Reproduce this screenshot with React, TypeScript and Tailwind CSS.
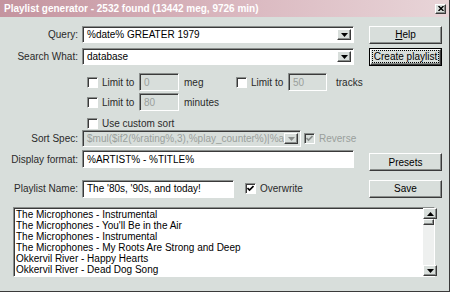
import React from "react";

const font = { fontFamily: "'Liberation Sans', Arial, sans-serif" };

const sunken =
  "border border-t-[#8a8e8c] border-l-[#8a8e8c] border-b-white border-r-white shadow-[inset_1px_1px_0_#3a3a3a]";
const raised =
  "border border-t-white border-l-white border-b-[#3a3a3a] border-r-[#3a3a3a] shadow-[inset_-1px_-1px_0_#8a8e8c]";

function Arrow({ up, disabled }: { up?: boolean; disabled?: boolean }) {
  return (
    <div className={`w-[14px] h-full flex items-center justify-center bg-[#d8dedb] ${raised}`}>
      <svg width="7" height="4" viewBox="0 0 7 4">
        <path d={up ? "M0 4 L3.5 0 L7 4 Z" : "M0 0 L7 0 L3.5 4 Z"} fill={disabled ? "#8a8e8c" : "#000"} />
      </svg>
    </div>
  );
}

function Combo({ value, width, disabled }: { value: string; width: number; disabled?: boolean }) {
  return (
    <div
      className={`h-[17px] flex items-stretch p-[2px] ${sunken} ${disabled ? "bg-[#d8dedb]" : "bg-white"}`}
      style={{ width }}
    >
      <div className={`flex-1 overflow-hidden whitespace-nowrap leading-[12px] pl-[2px] ${disabled ? "text-[#9aa09c]" : "text-black"}`}>
        {value}
      </div>
      <Arrow disabled={disabled} />
    </div>
  );
}

function Field({ value, width, disabled }: { value: string; width: number; disabled?: boolean }) {
  return (
    <div
      className={`h-[18px] flex items-center pl-[4px] whitespace-nowrap overflow-hidden ${sunken} ${disabled ? "bg-[#d8dedb] text-[#9aa09c]" : "bg-white text-black"}`}
      style={{ width }}
    >
      {value}
    </div>
  );
}

function Check({ checked, disabled }: { checked?: boolean; disabled?: boolean }) {
  return (
    <div className={`w-[11px] h-[11px] shrink-0 flex items-center justify-center ${sunken} ${disabled ? "bg-[#d8dedb]" : "bg-white"}`}>
      {checked && (
        <svg width="7" height="7" viewBox="0 0 7 7">
          <path d="M0.5 3 L2.5 5 L6.5 1" stroke={disabled ? "#8a8e8c" : "#000"} strokeWidth="1.6" fill="none" />
        </svg>
      )}
    </div>
  );
}

function Button({ children, focused }: { children: React.ReactNode; focused?: boolean }) {
  return (
    <div className={`w-[73px] h-[18px] bg-[#d8dedb] ${focused ? "border border-black" : ""}`}>
      <div className={`w-full h-full flex items-center justify-center whitespace-nowrap ${raised}`}>
        <span className={focused ? "outline outline-1 outline-dotted outline-black px-[1px] leading-[11px]" : ""}>
          {children}
        </span>
      </div>
    </div>
  );
}

function Label({ children }: { children: React.ReactNode }) {
  return <div className="w-[82px] shrink-0 text-right pr-[4px] text-[#2a2a2a] whitespace-nowrap">{children}</div>;
}

const songs = [
  "The Microphones - Instrumental",
  "The Microphones - You'll Be in the Air",
  "The Microphones - Instrumental",
  "The Microphones - My Roots Are Strong and Deep",
  "Okkervil River - Happy Hearts",
  "Okkervil River - Dead Dog Song",
  "Okkervil River - Westfall",
];

export default function App() {
  return (
    <div
      className="w-[450px] h-[292px] bg-[#d8dedb] text-[10px] text-black flex flex-col border-r border-b border-r-[#3a3a3a] border-b-[#3a3a3a] overflow-hidden"
      style={font}
    >
      {/* Title bar */}
      <div className="h-[17px] shrink-0 flex items-center justify-between pl-[4px] pr-[3px] bg-gradient-to-r from-[#c4949f] via-[#d9b6be] to-[#e8d5d8]">
        <span className="text-white font-bold text-[10px] whitespace-nowrap">
          Playlist generator - 2532 found (13442 meg, 9726 min)
        </span>
        <div className={`w-[11px] h-[10px] bg-[#d8dedb] flex items-center justify-center ${raised}`}>
          <svg width="6" height="5" viewBox="0 0 6 5">
            <path d="M0.5 0 L5.5 5 M5.5 0 L0.5 5" stroke="#000" strokeWidth="1.4" />
          </svg>
        </div>
      </div>

      <div className="flex flex-col pr-[7px] pt-[9px]">
        <div className="flex items-center h-[17px]">
          <Label>Query:</Label>
          <Combo value="%date% GREATER 1979" width={272} />
          <div className="ml-auto"><Button><span className="underline">H</span>elp</Button></div>
        </div>
        <div className="flex items-center h-[17px] mt-[5px]">
          <Label>Search What:</Label>
          <Combo value="database" width={272} />
          <div className="ml-auto"><Button focused>Create playlist</Button></div>
        </div>

        <div className="flex items-center h-[18px] mt-[8px] pl-[87px] whitespace-nowrap text-[#2a2a2a]">
          <Check />
          <span className="ml-[4px] w-[37px]">Limit to</span>
          <Field value="0" width={40} disabled />
          <span className="ml-[5px] w-[52px]">meg</span>
          <Check />
          <span className="ml-[4px] w-[37px]">Limit to</span>
          <Field value="50" width={39} disabled />
          <span className="ml-[9px]">tracks</span>
        </div>
        <div className="flex items-center h-[18px] mt-[2px] pl-[87px] whitespace-nowrap text-[#2a2a2a]">
          <Check />
          <span className="ml-[4px] w-[37px]">Limit to</span>
          <Field value="80" width={40} disabled />
          <span className="ml-[5px]">minutes</span>
        </div>
        <div className="flex items-center h-[12px] mt-[6px] pl-[87px] whitespace-nowrap text-[#2a2a2a]">
          <Check />
          <span className="ml-[4px]">Use custom sort</span>
        </div>
        <div className="flex items-center h-[17px] mt-[1px] whitespace-nowrap">
          <Label>Sort Spec:</Label>
          <Combo value="$mul($if2(%rating%,3),%play_counter%)|%added%" width={219} disabled />
          <div className="ml-[3px]"><Check checked disabled /></div>
          <span className="ml-[4px] text-[#9aa09c]">Reverse</span>
        </div>
        <div className="flex items-start h-[21px] mt-[3px]">
          <div className="h-[18px] flex items-center"><Label>Display format:</Label></div>
          <Field value="%ARTIST% - %TITLE%" width={272} />
          <div className="ml-auto mt-[3px]"><Button>Presets</Button></div>
        </div>
        <div className="flex items-center h-[19px] mt-[8px] whitespace-nowrap">
          <Label>Playlist Name:</Label>
          <Field value="The '80s, '90s, and today!" width={152} />
          <div className="ml-[11px]"><Check checked /></div>
          <span className="ml-[4px] text-[#2a2a2a]">Overwrite</span>
          <div className="ml-auto"><Button>Save</Button></div>
        </div>
      </div>

      {/* Results list */}
      <div className={`ml-[13px] mt-[9px] w-[422px] h-[70px] shrink-0 bg-white flex ${sunken}`}>
        <div className="flex-1 overflow-hidden pl-[2px] pt-[1px]">
          {songs.map((s, i) => (
            <div key={i} className="h-[11px] leading-[11px] whitespace-nowrap">
              {s}
            </div>
          ))}
        </div>
        <div className="w-[11px] flex flex-col bg-[#eef0ef]">
          <div className="h-[11px]"><Arrow up /></div>
          <div className={`h-[6px] bg-[#d8dedb] ${raised}`} />
          <div className="flex-1" />
          <div className="h-[11px]"><Arrow /></div>
        </div>
      </div>
    </div>
  );
}
